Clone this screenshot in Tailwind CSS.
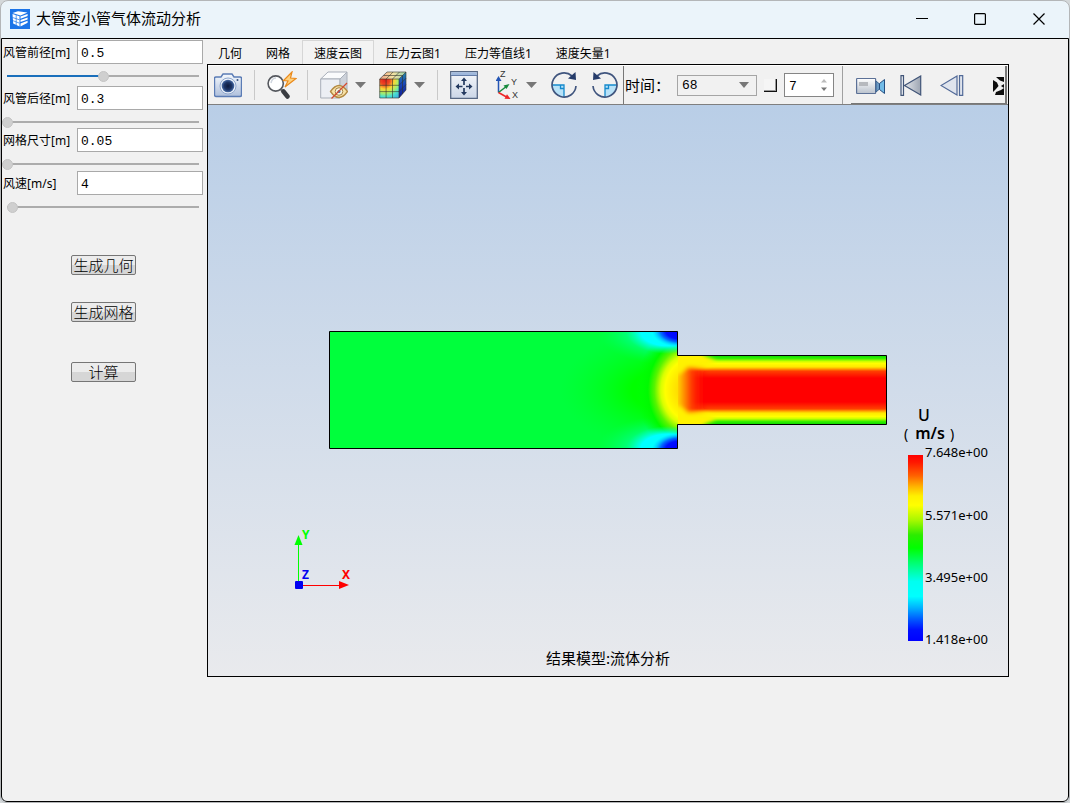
<!DOCTYPE html>
<html lang="zh-CN">
<head>
<meta charset="utf-8">
<title>大管变小管气体流动分析</title>
<script src="https://cdn.jsdelivr.net/npm/@tailwindcss/browser@4"></script>
</head>
<body class="h-screen overflow-hidden bg-[#d4d8da] font-['Noto_Sans','Noto_Sans_CJK_SC',sans-serif] text-xs text-black">
<div class="flex h-full flex-col overflow-hidden rounded-t-lg rounded-b-md border border-[#b4b6b8] bg-[#ebf4fa]">
  <header class="flex h-[37px] shrink-0 items-center pr-px pb-0.5 pl-[9px]">
    <svg class="size-5 shrink-0" viewBox="0 0 20 20" aria-hidden="true">
      <rect width="20" height="20" fill="#1b74e8"/>
      <path d="M2.500 4 8 2.300 17.500 3.600 10.500 6.500zM2.500 5 9.500 7.300V17.500L3.200 14.500z" fill="#fff"/>
      <path d="M2.500 8.500 9.500 10.800M2.800 11.600 9.500 14.200M6.200 6v10.500" stroke="#1b74e8" stroke-width=".7"/>
      <path d="M10.500 7.600 17.600 5V7l-7.100 2.700zM10.500 11l7.100-2.600v2l-7.100 2.700zM10.500 14.400l7.100-2.600v2l-7.100 3.700z" fill="#fff"/>
    </svg>
    <h1 class="ml-1.5 flex-1 pb-0.5 text-[15px] leading-5">大管变小管气体流动分析</h1>
    <button class="grid h-full w-[58px] place-items-center" aria-label="最小化"><svg width="12" height="12" viewBox="0 0 12 12"><path d="M0 5.500H12" stroke="#000"/></svg></button>
    <button class="grid h-full w-[58px] place-items-center" aria-label="最大化"><svg width="12" height="12" viewBox="0 0 12 12"><rect x=".6" y=".6" width="10.800" height="10.800" rx="1" fill="none" stroke="#000" stroke-width="1.200"/></svg></button>
    <button class="grid h-full w-[59px] place-items-center" aria-label="关闭"><svg width="12" height="12" viewBox="0 0 12 12"><path d="M.5 .5l11 11M11.500 .5l-11 11" stroke="#000" stroke-width="1.200"/></svg></button>
  </header>

  <main class="flex min-h-0 flex-1 overflow-hidden rounded-b-md border border-black bg-[#f1f1f1]">
    <form class="flex w-[205px] shrink-0 flex-col pt-px">
      <div class="flex h-6 items-center"><label for="d1" class="w-[75px] pt-0.5 pl-px whitespace-nowrap">风管前径[m]</label><input id="d1" value="0.5" class="h-6 w-[126px] border border-[#a9a9a9] bg-white px-[3px] pt-0.5 font-['Liberation_Mono',monospace] text-[13px] outline-none"></div>
      <input type="range" aria-label="风管前径滑块" value="50" class="mt-1.5 mb-1 ml-[5px] h-3 w-48 appearance-none bg-[linear-gradient(to_right,#1a6fbb_50%,#acacac_50%)] bg-[length:100%_2px] bg-center bg-no-repeat [&::-webkit-slider-thumb]:size-[11px] [&::-webkit-slider-thumb]:appearance-none [&::-webkit-slider-thumb]:rounded-full [&::-webkit-slider-thumb]:border [&::-webkit-slider-thumb]:border-[#c4c4c4] [&::-webkit-slider-thumb]:bg-[#cfcfcf]">
      <div class="flex h-6 items-center"><label for="d2" class="w-[75px] pt-0.5 pl-px whitespace-nowrap">风管后径[m]</label><input id="d2" value="0.3" class="h-6 w-[126px] border border-[#a9a9a9] bg-white px-[3px] pt-0.5 font-['Liberation_Mono',monospace] text-[13px] outline-none"></div>
      <input type="range" aria-label="风管后径滑块" value="0" class="mt-1.5 h-3 w-[197px] appearance-none bg-[linear-gradient(#acacac,#acacac)] bg-[length:100%_2px] bg-center bg-no-repeat [&::-webkit-slider-thumb]:size-[11px] [&::-webkit-slider-thumb]:appearance-none [&::-webkit-slider-thumb]:rounded-full [&::-webkit-slider-thumb]:border [&::-webkit-slider-thumb]:border-[#c4c4c4] [&::-webkit-slider-thumb]:bg-[#cfcfcf]">
      <div class="flex h-6 items-center"><label for="mesh" class="w-[75px] pt-0.5 pl-px whitespace-nowrap">网格尺寸[m]</label><input id="mesh" value="0.05" class="h-6 w-[126px] border border-[#a9a9a9] bg-white px-[3px] pt-0.5 font-['Liberation_Mono',monospace] text-[13px] outline-none"></div>
      <input type="range" aria-label="网格尺寸滑块" value="0" class="mt-1.5 mb-px h-3 w-[197px] appearance-none bg-[linear-gradient(#acacac,#acacac)] bg-[length:100%_2px] bg-center bg-no-repeat [&::-webkit-slider-thumb]:size-[11px] [&::-webkit-slider-thumb]:appearance-none [&::-webkit-slider-thumb]:rounded-full [&::-webkit-slider-thumb]:border [&::-webkit-slider-thumb]:border-[#c4c4c4] [&::-webkit-slider-thumb]:bg-[#cfcfcf]">
      <div class="flex h-6 items-center"><label for="speed" class="w-[75px] pt-0.5 pl-px whitespace-nowrap">风速[m/s]</label><input id="speed" value="4" class="h-6 w-[126px] border border-[#a9a9a9] bg-white px-[3px] pt-0.5 font-['Liberation_Mono',monospace] text-[13px] outline-none"></div>
      <input type="range" aria-label="风速滑块" value="0" class="mt-1.5 ml-[5px] h-3 w-48 appearance-none bg-[linear-gradient(#acacac,#acacac)] bg-[length:100%_2px] bg-center bg-no-repeat [&::-webkit-slider-thumb]:size-[11px] [&::-webkit-slider-thumb]:appearance-none [&::-webkit-slider-thumb]:rounded-full [&::-webkit-slider-thumb]:border [&::-webkit-slider-thumb]:border-[#c4c4c4] [&::-webkit-slider-thumb]:bg-[#cfcfcf]">
      <div class="mt-[42px] flex flex-col items-center pr-0.5">
        <button type="button" class="flex h-5 w-[65px] items-center justify-center rounded-xs border border-[#767676] bg-linear-to-b from-[#ececec] from-50% to-[#d6d6d6] to-50% text-[15px] leading-none font-light whitespace-nowrap">生成几何</button>
        <button type="button" class="mt-[27px] flex h-5 w-[65px] items-center justify-center rounded-xs border border-[#767676] bg-linear-to-b from-[#ececec] from-50% to-[#d6d6d6] to-50% text-[15px] leading-none font-light whitespace-nowrap">生成网格</button>
        <button type="button" class="mt-10 flex h-5 w-[65px] items-center justify-center rounded-xs border border-[#767676] bg-linear-to-b from-[#ececec] from-50% to-[#d6d6d6] to-50% text-[15px] leading-none font-light whitespace-nowrap">计算</button>
      </div>
    </form>

    <section class="mr-[59px] mb-[124px] flex min-w-0 flex-1 flex-col">
      <nav class="flex h-[25px] shrink-0 items-end pr-2 whitespace-nowrap" role="tablist">
        <button role="tab" class="-ml-px h-6 px-3 pt-1">几何</button>
        <button role="tab" class="h-6 px-3 pt-1">网格</button>
        <button role="tab" aria-selected="true" class="h-6 border border-b-0 border-[#d6d6d6] bg-[#f3f3f3] px-[11px] pt-[3px]">速度云图</button>
        <button role="tab" class="h-6 px-3 pt-1">压力云图1</button>
        <button role="tab" class="h-6 px-3 pt-1">压力等值线1</button>
        <button role="tab" class="h-6 px-3 pt-1">速度矢量1</button>
      </nav>
      <div class="flex min-h-0 flex-1 flex-col border border-black bg-[#c2c8d0]">
        <div class="flex h-10 shrink-0 items-center overflow-hidden border-t border-b border-t-white border-b-[#7f7f7f] bg-[#f1f1f1] pl-1.5 *:shrink-0" role="toolbar">
          <button aria-label="截图" class="w-7"><svg class="h-7 w-7" viewBox="0 0 28 28">
            <defs><linearGradient id="cam" x2="0" y2="1"><stop stop-color="#f5f9fd"/><stop offset="1" stop-color="#aebfdc"/></linearGradient><radialGradient id="lens"><stop stop-color="#0d1a3c"/><stop offset=".6" stop-color="#1d3566"/><stop offset="1" stop-color="#4a6ea8"/></radialGradient></defs>
            <path d="M2 6h5l2-3h9l2 3h6q1.500 0 1.500 1.500v16.500q0 1.500-1.500 1.500H2Q.5 25.500.5 24V7.500Q.5 6 2 6z" fill="url(#cam)" stroke="#5b7cb5" stroke-width="1.400"/>
            <circle cx="14" cy="15" r="8" fill="#eef3fa" stroke="#8ea6cd"/><circle cx="14" cy="15" r="6.300" fill="url(#lens)"/><circle cx="23.500" cy="9" r="1" fill="#38527f"/></svg></button>
          <i class="ml-3 h-[30px] w-px bg-[#c9c9c9]"></i>
          <button aria-label="快速探测" class="ml-3 w-[30px]"><svg class="h-7 w-[30px]" viewBox="0 0 30 28">
            <path d="M14 18.500 16.500 21" stroke="#777" stroke-width="2.500"/><path d="M16.500 20.500 20.500 25.500" stroke="#3a3d42" stroke-width="4.500" stroke-linecap="round"/>
            <circle cx="8.700" cy="12.500" r="7.600" fill="#fff" stroke="#55585e" stroke-width="1.600"/><path d="M4 12q1-5 5-5" fill="none" stroke="#cfd5de" stroke-width="1.500"/>
            <path d="M25 1 16.500 9.500l4.500.5-3 6L29 7.500 23.500 7z" fill="#ffd07c" stroke="#ea8a1c" stroke-width="1.200"/></svg></button>
          <i class="ml-2.5 h-[30px] w-px bg-[#c9c9c9]"></i>
          <button aria-label="隐藏实体" class="ml-3 w-7"><svg class="h-7 w-7" viewBox="0 0 28 28">
            <path d="M.7 8 8 1h19L20 8z" fill="#fafbfc" stroke="#a9afb9"/><path d="M.7 8H20v19H.7z" fill="#eceff4" stroke="#a9afb9"/><path d="M20 8l7-7v18l-7 8z" fill="#cdd2da" stroke="#a9afb9"/>
            <path d="M10.500 20.500q8.500-12 17 0-8.500 12-17 0z" fill="#f8e2a5" stroke="#b38a43" stroke-width="1.300"/><circle cx="19" cy="20.500" r="3.800" fill="#faf4dd" stroke="#a28048"/><circle cx="19" cy="20.500" r="1.500" fill="#4471a8"/><path d="M11.500 27.500 27 12" stroke="#d4492f" stroke-width="1.300"/></svg></button>
          <button aria-label="实体选项" class="ml-[7px] w-[11px]"><svg width="11" height="6" viewBox="0 0 11 6"><path d="M0 0h11L5.500 6z" fill="#777"/></svg></button>
          <button aria-label="云图显示" class="ml-[13px] w-7"><svg class="h-7 w-7" viewBox="0 0 28 28">
            <defs><radialGradient id="cubeFace" gradientUnits="userSpaceOnUse" cx="6" cy="9" r="24"><stop stop-color="#e0201c"/><stop offset=".2" stop-color="#f04823"/><stop offset=".38" stop-color="#fbd533"/><stop offset=".55" stop-color="#a9ee69"/><stop offset=".7" stop-color="#4be0d0"/><stop offset="1" stop-color="#3297ee"/></radialGradient><linearGradient id="cubeTop"><stop stop-color="#ed9b83"/><stop offset=".5" stop-color="#f5e3a3"/><stop offset="1" stop-color="#98cfa9"/></linearGradient><linearGradient id="cubeSide" x2="0" y2="1"><stop stop-color="#258ba3"/><stop offset=".45" stop-color="#1747bd"/><stop offset="1" stop-color="#101991"/></linearGradient></defs>
            <path d="M.7 8 8 1h19l-7 7z" fill="url(#cubeTop)"/><path d="M.7 8H20v19H.7z" fill="url(#cubeFace)"/><path d="M20 8l7-7v18l-7 8z" fill="url(#cubeSide)"/>
            <path d="M.7 8 8 1h19v18l-7 8H.7zM.7 8H20M.7 14.300H20M.7 20.600H20M7.100 8v19M13.500 8v19M20 8v19M7.100 8l7-7M13.500 8l7-7M20 8l7-7M4.500 4.500h19M20 14.300l7-7M20 20.600l7-7M23.500 4.500v18.500" fill="none" stroke="#30332c" stroke-width=".6"/></svg></button>
          <button aria-label="云图选项" class="ml-[7px] w-[11px]"><svg width="11" height="6" viewBox="0 0 11 6"><path d="M0 0h11L5.500 6z" fill="#777"/></svg></button>
          <i class="ml-3 h-[30px] w-px bg-[#c9c9c9]"></i>
          <button aria-label="适合窗口" class="ml-3 w-7"><svg class="h-7 w-7" viewBox="0 0 28 28">
            <defs><linearGradient id="fitFill" x2="0" y2="1"><stop stop-color="#f6f8fb"/><stop offset="1" stop-color="#cbd6e7"/></linearGradient></defs>
            <path d="M.7.7h26.600v26.600H.7z" fill="url(#fitFill)" stroke="#566783" stroke-width="1.300"/><path d="M1.300 1.300h25.400v3H1.300z" fill="#9fb8dc"/><path d="M1 4.500h26" stroke="#637ca7"/>
            <path d="M14 9.500V14M14 17v5M8.500 15.500h4M16 15.500h4" stroke="#243a60" stroke-width="1.700"/><path d="m14 6.500 3 3.500h-6zM14 24.500l3-3.500h-6zM5.500 15.500 9 12.500v6zM22.500 15.500 19 12.500v6z" fill="#243a60"/></svg></button>
          <button aria-label="视图方向" class="ml-[18px] w-6"><svg class="h-[30px] w-6" viewBox="0 0 24 30">
            <path d="M2.500 22.500V8" stroke="#2455b5" stroke-width="1.500"/><path d="m2.500 6 3 5h-6z" fill="#2455b5"/><path d="M2.500 22.500 11 16" stroke="#178a3c" stroke-width="1.500"/><path d="m13.500 14-3 5-3-3.500z" fill="#178a3c"/><path d="m2.500 22.500 8 4.500" stroke="#ed2727" stroke-width="1.500"/><path d="m14.500 29-6-.300 2.500-4.500z" fill="#ed2727"/>
            <g font-family="Liberation Sans" font-size="9" fill="#333"><text x="4" y="7">Z</text><text x="15" y="15">Y</text><text x="16" y="28">X</text></g></svg></button>
          <button aria-label="方向选项" class="ml-1.5 w-[11px]"><svg width="11" height="6" viewBox="0 0 11 6"><path d="M0 0h11L5.500 6z" fill="#777"/></svg></button>
          <button aria-label="顺时针旋转" class="ml-[13px] w-7"><svg class="h-7 w-7" viewBox="0 0 28 28">
            <path d="M2 14H14V26A12 12 0 0 1 2 14z" fill="#b8e2f8"/><path d="M2 14H14V26M10.500 14v3.500H14" fill="none" stroke="#158acd" stroke-width="1.300"/>
            <path d="M22 5A12 12 0 1 0 26 15" fill="none" stroke="#40557e" stroke-width="1.700"/><path d="m25.500 1 .500 8-8-1.500z" fill="#263c6a"/></svg></button>
          <button aria-label="逆时针旋转" class="ml-[13px] w-7"><svg class="h-7 w-7" viewBox="0 0 28 28">
            <path d="M26 14H14V26A12 12 0 0 0 26 14z" fill="#b8e2f8"/><path d="M26 14H14V26M17.500 14v3.500H14" fill="none" stroke="#158acd" stroke-width="1.300"/>
            <path d="M6 5A12 12 0 1 1 2 15" fill="none" stroke="#40557e" stroke-width="1.700"/><path d="m2.500 1-.500 8 8-1.500z" fill="#263c6a"/></svg></button>
          <i class="ml-1 h-full w-px bg-[#777]"></i>
          <label for="time" class="ml-px w-[52px] text-[15px] whitespace-nowrap">时间：</label>
          <div class="relative w-20">
            <select id="time" class="h-[21px] w-full appearance-none border border-[#a5a5a5] bg-[#f1f1f1] px-1 font-['Liberation_Mono',monospace] text-[13px] leading-none outline-none"><option>68</option></select>
            <svg class="pointer-events-none absolute top-[7px] right-2" width="10" height="6" viewBox="0 0 10 6"><path d="M0 0h10L5 6z" fill="#777"/></svg>
          </div>
          <input type="checkbox" aria-label="锁定时间" class="ml-[7px] size-[13px] appearance-none border-r border-b border-[#111] bg-[#f5f5f5] shadow-[inset_-1px_-1px_0_#999]">
          <div class="relative ml-[7px] w-[50px]">
            <input type="text" role="spinbutton" aria-label="步数" value="7" class="block h-6 w-full border border-[#858585] bg-white px-1 pt-0.5 font-['Liberation_Mono',monospace] text-[13px] outline-none">
            <svg class="pointer-events-none absolute top-1.5 right-[7px]" width="6" height="12" viewBox="0 0 6 12"><path d="M0 3.500 3 0l3 3.500z" fill="#bbb"/><path d="m0 8.500 3 3.500 3-3.500z" fill="#777"/></svg>
          </div>
          <i class="ml-2 h-full w-px bg-[#a0a0a0]"></i>
          <div class="mr-px ml-2 flex h-full min-w-0 flex-1 items-center border-r-2 border-b border-[#777] pt-0.5 pl-[5px]">
            <button aria-label="录制动画"><svg class="h-[18px] w-[29px]" viewBox="0 0 29 18"><defs><linearGradient id="vid" x2="0" y2="1"><stop stop-color="#fff"/><stop offset="1" stop-color="#bac2cd"/></linearGradient></defs><rect x=".6" y="1.500" width="19" height="15" rx=".5" fill="url(#vid)" stroke="#5c7197" stroke-width="1.200"/><rect x="3" y="5" width="9" height="4" fill="#b6b9be"/><path d="M20 4l3.500 3v5L20 15z" fill="#6b9ac4" stroke="#3d638f"/><path d="M23.500 6.500 28.500 2.500v14l-5-4z" fill="#72bce8" stroke="#254e80"/></svg></button>
            <button aria-label="第一帧" class="ml-[15px]"><svg class="h-[21px] w-[22px]" viewBox="0 0 22 21"><defs><linearGradient id="play"><stop stop-color="#f3f5f8"/><stop offset="1" stop-color="#9da5b2"/></linearGradient></defs><path d="M1 .7h2.500v19.600H1zM20.700 1v19L4.500 10.500z" fill="url(#play)" stroke="#415578" stroke-width="1.200"/></svg></button>
            <button aria-label="上一帧" class="ml-[18px]"><svg class="h-[21px] w-6" viewBox="0 0 24 21"><path d="M17 1v19L1 10.500zM19.500.7h3.200v19.600h-3.200z" fill="#dfe4ed" stroke="#526a98" stroke-width="1.200"/></svg></button>
            <button aria-label="更多工具" class="mr-px ml-auto"><svg class="h-[18px] w-[11px]" viewBox="0 0 11 18"><defs><filter id="soft"><feGaussianBlur stdDeviation=".6"/></filter></defs><g filter="url(#soft)"><path d="M3 0h8v5L7 3.500zM0 3l4 2.500L5.500 9 3 12l-3 3zM11 7v4L8 9zM3 15l5-2 3-2v7H2z" fill="#111"/></g></svg></button>
          </div>
        </div>

        <svg class="block min-h-0 w-full flex-1 bg-linear-to-b from-[#b9cee7] to-[#e9eaed]" viewBox="208 105 800 571" role="img" aria-label="流体分析速度云图">
          <defs>
            <clipPath id="duct"><path d="M329.500 331.500H677.500V355.500H886.500V424.500H677.500V448.500H329.500z"/></clipPath>
            <clipPath id="wide"><path d="M329 331h349v118H329z"/></clipPath>
            <clipPath id="narrow"><path d="M678 355h210v70h-210z"/></clipPath>
            <filter id="blend" x="-20%" y="-20%" width="140%" height="140%"><feGaussianBlur stdDeviation="2"/></filter>
            <linearGradient id="jet" x2="0" y2="1"><stop stop-color="#00d800"/><stop offset=".05" stop-color="#38ee00"/><stop offset=".09" stop-color="#c8ff00"/><stop offset=".12" stop-color="#ff0"/><stop offset=".17" stop-color="#ffe800"/><stop offset=".2" stop-color="#ff9c00"/><stop offset=".23" stop-color="#ff4000"/><stop offset=".33" stop-color="red"/><stop offset=".67" stop-color="red"/><stop offset=".77" stop-color="#ff4000"/><stop offset=".8" stop-color="#ff9c00"/><stop offset=".83" stop-color="#ffe800"/><stop offset=".88" stop-color="#ff0"/><stop offset=".91" stop-color="#c8ff00"/><stop offset=".95" stop-color="#38ee00"/><stop offset="1" stop-color="#00d800"/></linearGradient>
            <linearGradient id="inlet" gradientUnits="userSpaceOnUse" x1="668" x2="708" y1="0" y2="0"><stop stop-color="#fff000"/><stop offset=".22" stop-color="#ffdc00"/><stop offset=".36" stop-color="#ffa000"/><stop offset=".5" stop-color="#ff6000"/><stop offset=".62" stop-color="#ff3800" stop-opacity=".85"/><stop offset="1" stop-color="red" stop-opacity="0"/></linearGradient>
            <radialGradient id="mouth" gradientUnits="userSpaceOnUse" cx="0" cy="0" r="1" gradientTransform="translate(690 390) scale(54 66)"><stop offset=".22" stop-color="#ffdc00"/><stop offset=".36" stop-color="#fff000"/><stop offset=".46" stop-color="#ff0"/><stop offset=".54" stop-color="#d8ff00"/><stop offset=".66" stop-color="#58f400"/><stop offset=".78" stop-color="#00fa00"/><stop offset="1" stop-color="#00ff08" stop-opacity="0"/></radialGradient>
            <radialGradient id="approach" gradientUnits="userSpaceOnUse" cx="0" cy="0" r="1" gradientTransform="translate(670 390) scale(110 60)"><stop offset=".35" stop-color="#0f0"/><stop offset="1" stop-color="#00ff28" stop-opacity="0"/></radialGradient>
            <radialGradient id="slow"><stop offset=".35" stop-color="#00ffb4"/><stop offset=".6" stop-color="#00ff90" stop-opacity=".7"/><stop offset="1" stop-color="#00ff50" stop-opacity="0"/></radialGradient>
            <radialGradient id="slower"><stop offset=".65" stop-color="#0ff"/><stop offset="1" stop-color="#00ffb0" stop-opacity="0"/></radialGradient>
            <radialGradient id="still"><stop stop-color="#00f"/><stop offset=".5" stop-color="#0010ff"/><stop offset=".7" stop-color="#0070ff"/><stop offset="1" stop-color="#0cf" stop-opacity="0"/></radialGradient>
            <linearGradient id="legend" x2="0" y2="1"><stop stop-color="red"/><stop offset=".04" stop-color="#ff1800"/><stop offset=".11" stop-color="#ff6000"/><stop offset=".17" stop-color="#ffb400"/><stop offset=".22" stop-color="#fff000"/><stop offset=".27" stop-color="#ff0"/><stop offset=".35" stop-color="#a8f800"/><stop offset=".43" stop-color="#2cec00"/><stop offset=".5" stop-color="#0f0"/><stop offset=".58" stop-color="#00ff70"/><stop offset=".68" stop-color="#00fff0"/><stop offset=".76" stop-color="#0ff"/><stop offset=".82" stop-color="#00b4ff"/><stop offset=".89" stop-color="#0050ff"/><stop offset=".94" stop-color="#0010ff"/><stop offset="1" stop-color="#00f"/></linearGradient>
          </defs>
          <g clip-path="url(#duct)">
            <path d="M329 331h349v118H329z" fill="#00ff3c"/>
            <g clip-path="url(#narrow)">
              <path d="M677 355h210v70H677z" fill="url(#jet)"/>
              <g filter="url(#blend)">
                <path d="M660 367h48v46h-48z" fill="url(#inlet)"/>
                <path d="M660 345h32l14 11 10 5-8 5-20 1-8 7h-20zM660 435h32l14-11 10-5-8-5-20-1-8-7h-20z" fill="#fff200"/>
              </g>
            </g>
            <g clip-path="url(#wide)">
              <ellipse cx="670" cy="390" rx="110" ry="60" fill="url(#approach)"/>
              <ellipse cx="672" cy="331" rx="76" ry="34" fill="url(#slow)"/>
              <ellipse cx="672" cy="449" rx="76" ry="34" fill="url(#slow)"/>
              <ellipse cx="690" cy="390" rx="54" ry="66" fill="url(#mouth)"/>
              <ellipse cx="668" cy="331" rx="42" ry="23" fill="url(#slower)"/>
              <ellipse cx="668" cy="449" rx="42" ry="23" fill="url(#slower)"/>
              <ellipse cx="680" cy="331" rx="28" ry="16" fill="url(#still)"/>
              <ellipse cx="680" cy="449" rx="28" ry="16" fill="url(#still)"/>
            </g>
          </g>
          <path d="M329.500 331.500H677.500V355.500H886.500V424.500H677.500V448.500H329.500z" fill="none" stroke="#000"/>
          <path d="M298.500 545v36" stroke="#0f0"/><path d="m298.500 535 4 10h-8z" fill="#0f0"/>
          <path d="M303 585.500h36" stroke="red"/><path d="M339 581v8l10-4z" fill="red"/>
          <rect x="295" y="581" width="8" height="8" rx="1" fill="#0000f0"/>
          <g font-family="Noto Sans" font-size="12" font-weight="700"><text x="302" y="539" fill="#0f0">Y</text><text x="302" y="579" fill="#0000f0">Z</text><text x="342" y="579" fill="red">X</text></g>
          <g font-family="Noto Sans" font-size="16" font-weight="500" text-anchor="middle"><text x="924" y="421">U</text><text x="930" y="439" font-weight="600">m/s</text></g>
          <g font-family="Noto Sans" font-size="14"><text x="904" y="439">(</text><text x="950" y="439">)</text></g>
          <rect x="908" y="455" width="15" height="186" fill="url(#legend)"/>
          <g font-family="Noto Sans" font-size="13"><text x="925" y="457">7.648e+00</text><text x="925" y="520">5.571e+00</text><text x="925" y="582">3.495e+00</text><text x="925" y="644">1.418e+00</text></g>
          <text x="608" y="664" font-family="Noto Sans CJK SC" font-size="15" text-anchor="middle">结果模型:流体分析</text>
        </svg>
      </div>
    </section>
  </main>
</div>
</body>
</html>
